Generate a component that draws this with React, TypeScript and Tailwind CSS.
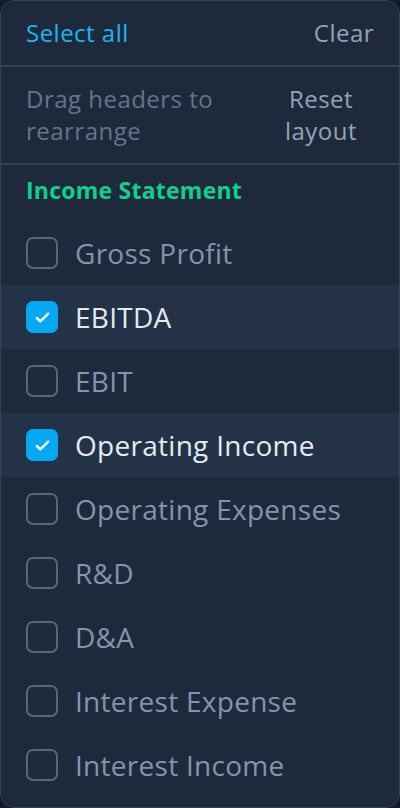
import { useState } from 'react'

const ITEMS = [
  { label: 'Gross Profit', checked: false },
  { label: 'EBITDA', checked: true },
  { label: 'EBIT', checked: false },
  { label: 'Operating Income', checked: true },
  { label: 'Operating Expenses', checked: false },
  { label: 'R&D', checked: false },
  { label: 'D&A', checked: false },
  { label: 'Interest Expense', checked: false },
  { label: 'Interest Income', checked: false },
]

function Checkbox({ checked }: { checked: boolean }) {
  if (checked) {
    return (
      <span className="flex h-8 w-8 shrink-0 items-center justify-center rounded-[7px] bg-[#03a9f4]">
        <svg viewBox="0 0 24 24" className="h-[21px] w-[21px]" fill="none" stroke="white" strokeWidth={2.8} strokeLinecap="round" strokeLinejoin="round">
          <path d="M5.5 12.5l4 4L18.5 7.5" />
        </svg>
      </span>
    )
  }
  return <span className="h-8 w-8 shrink-0 rounded-[7px] border-2 border-[#56657c]" />
}

export default function App() {
  const [items, setItems] = useState(ITEMS)

  const toggle = (i: number) =>
    setItems(items.map((it, idx) => (idx === i ? { ...it, checked: !it.checked } : it)))

  return (
    <div className="h-[808px] w-[400px] bg-[#151b26]" style={{ fontFamily: '"Open Sans", sans-serif' }}>
      <div className="flex h-full flex-col overflow-hidden rounded-[14px] border border-[#334155] bg-[#1e293b]">
        <div className="flex h-[66px] shrink-0 items-center justify-between border-b-2 border-[#334155] px-[25px] text-[24px] tracking-[0.02em]">
          <button onClick={() => setItems(items.map((it) => ({ ...it, checked: true })))} className="text-[#1ab7f5]">
            Select all
          </button>
          <button onClick={() => setItems(items.map((it) => ({ ...it, checked: false })))} className="text-[#94a3b8]">
            Clear
          </button>
        </div>

        <div className="flex h-[98px] shrink-0 items-center justify-between border-b-2 border-[#334155] pl-[25px] pr-[42px] text-[24px] leading-[32px] tracking-[0.02em]">
          <p className="w-[220px] text-[#64748b]">Drag headers to rearrange</p>
          <button className="text-center text-[#94a3b8]">
            Reset
            <br />
            layout
          </button>
        </div>

        <div className="px-[25px] pt-[10px] pb-[16px] text-[23px] font-bold leading-[30px] tracking-[0.01em] text-[#10d08d]">
          Income Statement
        </div>

        <div className="flex flex-col">
          {items.map((it, i) => (
            <button
              key={it.label}
              onClick={() => toggle(i)}
              className={`flex h-16 items-center gap-[17px] px-[25px] text-left ${it.checked ? 'bg-[#243247]' : ''}`}
            >
              <Checkbox checked={it.checked} />
              <span className={`text-[28px] tracking-[0.01em] ${it.checked ? 'text-[#e5eaf1]' : 'text-[#8394ae]'}`}>{it.label}</span>
            </button>
          ))}
        </div>
      </div>
    </div>
  )
}
